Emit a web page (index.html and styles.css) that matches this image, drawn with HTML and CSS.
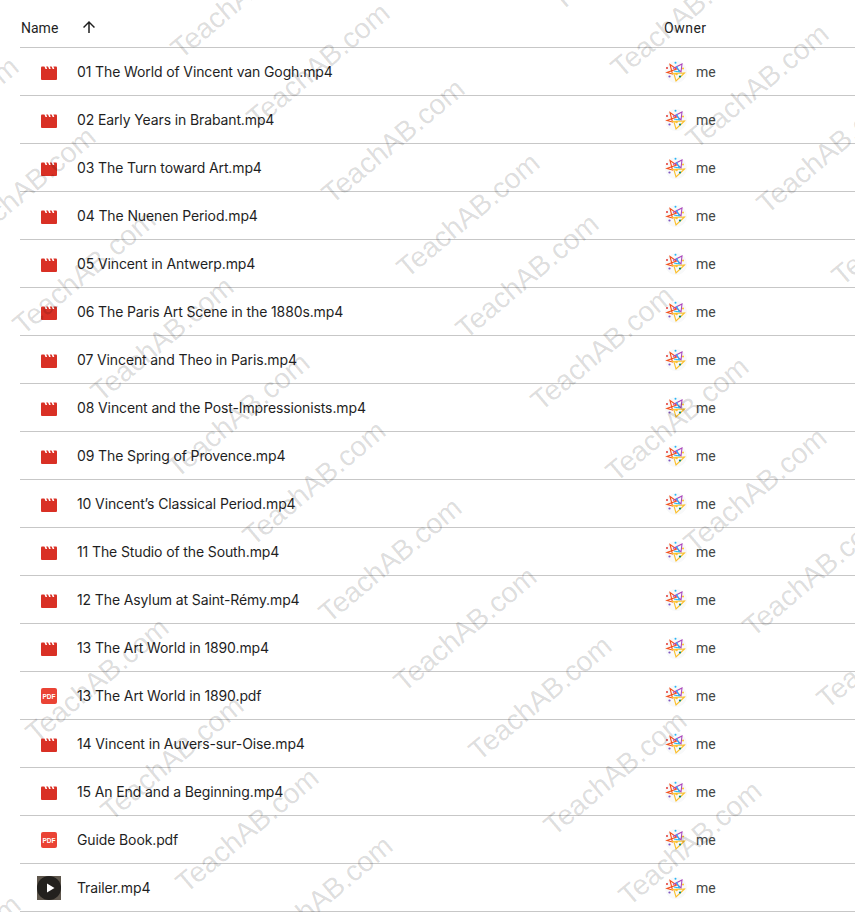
FILE: index.html
```html
<!DOCTYPE html>
<html lang="en">
  <head>
    <meta charset="UTF-8" />
    <title>Files</title>
    <link rel="stylesheet" href="styles.css">
  </head>
  <body>
    <!-- Shared icons -->
    <svg class="defs" width="0" height="0">
      <symbol id="video" viewBox="0 0 16 14">
        <path fill="#d93025" d="M0 1.500Q0 .5 1 .5h14q1 0 1 1v11.500q0 1-1 1H1q-1 0-1-1z" />
        <path fill="#fff" d="M3.300 0h1.800l1 3H4.500zM6.900 0h1.800l1 3H8.100zM10.500 0h1.800l1 3h-1.600z" />
      </symbol>
      <symbol id="pdf" viewBox="0 0 16 16">
        <rect width="16" height="16" rx="2" fill="#ea4335" />
        <text x="8" y="10.700" class="pdf-label">PDF</text>
      </symbol>
      <symbol id="thumb" viewBox="0 0 24 24">
        <rect width="24" height="24" fill="#5f574d" />
        <circle cx="12" cy="12" r="12" fill="#23211e" />
        <path fill="#fff" d="M10 7.500l7.500 4.500-7.500 4.500z" />
      </symbol>
      <symbol id="avatar" viewBox="0 0 22 22">
        <circle cx="11" cy="11" r="11" fill="#f8f9fa" />
        <g fill="none" stroke-width="1.100">
          <path stroke="#f4511e" d="M5 3.500L11.500 8 2 11.500l5.500 1.500L5 3.500z" />
          <path stroke="#ab47bc" d="M8 7.500L17 3l-1 8-5-4.500" />
          <path stroke="#29b6f6" d="M11.500 5L14.500 11 9 10" />
          <path stroke="#fbc02d" d="M6.500 12.500L19.500 12l-8.500 8-2-7" />
        </g>
        <circle cx="10.500" cy="1.800" r="1" fill="#29b6f6" />
        <circle cx="2" cy="7" r="1" fill="#e53935" />
        <circle cx="18" cy="7.500" r="1" fill="#fbc02d" />
        <circle cx="4.500" cy="15.500" r="1.100" fill="#7e57c2" />
        <circle cx="15" cy="15.500" r="1.100" fill="#00897b" />
        <circle cx="11.500" cy="13" r="1.300" fill="#fbc02d" />
      </symbol>
    </svg>

    <!-- File list -->
    <div class="list">
      <div class="row header">
        <div class="name-head">
          Name
          <svg class="sort" viewBox="0 0 24 24" width="18" height="18"><path d="M4 12l1.410 1.410L11 7.830V20h2V7.830l5.580 5.590L20 12l-8-8-8 8z" /></svg>
        </div>
        <div class="owner-head">Owner</div>
      </div>

      <div class="row"><div class="name"><svg class="icon-video"><use href="#video" /></svg><span>01 The World of Vincent van Gogh.mp4</span></div><div class="owner"><svg class="avatar"><use href="#avatar" /></svg>me</div></div>
      <div class="row"><div class="name"><svg class="icon-video"><use href="#video" /></svg><span>02 Early Years in Brabant.mp4</span></div><div class="owner"><svg class="avatar"><use href="#avatar" /></svg>me</div></div>
      <div class="row"><div class="name"><svg class="icon-video"><use href="#video" /></svg><span>03 The Turn toward Art.mp4</span></div><div class="owner"><svg class="avatar"><use href="#avatar" /></svg>me</div></div>
      <div class="row"><div class="name"><svg class="icon-video"><use href="#video" /></svg><span>04 The Nuenen Period.mp4</span></div><div class="owner"><svg class="avatar"><use href="#avatar" /></svg>me</div></div>
      <div class="row"><div class="name"><svg class="icon-video"><use href="#video" /></svg><span>05 Vincent in Antwerp.mp4</span></div><div class="owner"><svg class="avatar"><use href="#avatar" /></svg>me</div></div>
      <div class="row"><div class="name"><svg class="icon-video"><use href="#video" /></svg><span>06 The Paris Art Scene in the 1880s.mp4</span></div><div class="owner"><svg class="avatar"><use href="#avatar" /></svg>me</div></div>
      <div class="row"><div class="name"><svg class="icon-video"><use href="#video" /></svg><span>07 Vincent and Theo in Paris.mp4</span></div><div class="owner"><svg class="avatar"><use href="#avatar" /></svg>me</div></div>
      <div class="row"><div class="name"><svg class="icon-video"><use href="#video" /></svg><span>08 Vincent and the Post-Impressionists.mp4</span></div><div class="owner"><svg class="avatar"><use href="#avatar" /></svg>me</div></div>
      <div class="row"><div class="name"><svg class="icon-video"><use href="#video" /></svg><span>09 The Spring of Provence.mp4</span></div><div class="owner"><svg class="avatar"><use href="#avatar" /></svg>me</div></div>
      <div class="row"><div class="name"><svg class="icon-video"><use href="#video" /></svg><span>10 Vincent’s Classical Period.mp4</span></div><div class="owner"><svg class="avatar"><use href="#avatar" /></svg>me</div></div>
      <div class="row"><div class="name"><svg class="icon-video"><use href="#video" /></svg><span>11 The Studio of the South.mp4</span></div><div class="owner"><svg class="avatar"><use href="#avatar" /></svg>me</div></div>
      <div class="row"><div class="name"><svg class="icon-video"><use href="#video" /></svg><span>12 The Asylum at Saint-Rémy.mp4</span></div><div class="owner"><svg class="avatar"><use href="#avatar" /></svg>me</div></div>
      <div class="row"><div class="name"><svg class="icon-video"><use href="#video" /></svg><span>13 The Art World in 1890.mp4</span></div><div class="owner"><svg class="avatar"><use href="#avatar" /></svg>me</div></div>
      <div class="row"><div class="name"><svg class="icon-pdf"><use href="#pdf" /></svg><span>13 The Art World in 1890.pdf</span></div><div class="owner"><svg class="avatar"><use href="#avatar" /></svg>me</div></div>
      <div class="row"><div class="name"><svg class="icon-video"><use href="#video" /></svg><span>14 Vincent in Auvers-sur-Oise.mp4</span></div><div class="owner"><svg class="avatar"><use href="#avatar" /></svg>me</div></div>
      <div class="row"><div class="name"><svg class="icon-video"><use href="#video" /></svg><span>15 An End and a Beginning.mp4</span></div><div class="owner"><svg class="avatar"><use href="#avatar" /></svg>me</div></div>
      <div class="row"><div class="name"><svg class="icon-pdf"><use href="#pdf" /></svg><span>Guide Book.pdf</span></div><div class="owner"><svg class="avatar"><use href="#avatar" /></svg>me</div></div>
      <div class="row"><div class="name"><svg class="icon-thumb"><use href="#thumb" /></svg><span>Trailer.mp4</span></div><div class="owner"><svg class="avatar"><use href="#avatar" /></svg>me</div></div>
    </div>

    <!-- Watermark -->
    <svg class="watermarks" viewBox="0 0 855 912">
      <g transform="translate(2 0)">
        <text transform="translate(-116 183) rotate(-40)">TeachAB.com</text>
        <text transform="translate(-39 253) rotate(-40)">TeachAB.com</text>
        <text transform="translate(21 336) rotate(-40)">TeachAB.com</text>
        <text transform="translate(99 403) rotate(-40)">TeachAB.com</text>
        <text transform="translate(175 479) rotate(-40)">TeachAB.com</text>
        <text transform="translate(251 547) rotate(-40)">TeachAB.com</text>
        <text transform="translate(327 624) rotate(-40)">TeachAB.com</text>
        <text transform="translate(402 693) rotate(-40)">TeachAB.com</text>
        <text transform="translate(477 762) rotate(-40)">TeachAB.com</text>
        <text transform="translate(552 837) rotate(-40)">TeachAB.com</text>
        <text transform="translate(627 907) rotate(-40)">TeachAB.com</text>
        <text transform="translate(34 744) rotate(-40)">TeachAB.com</text>
        <text transform="translate(109 822) rotate(-40)">TeachAB.com</text>
        <text transform="translate(184 894) rotate(-40)">TeachAB.com</text>
        <text transform="translate(258 962) rotate(-40)">TeachAB.com</text>
        <text transform="translate(-114 1021) rotate(-40)">TeachAB.com</text>
        <text transform="translate(179 60) rotate(-40)">TeachAB.com</text>
        <text transform="translate(255 129) rotate(-40)">TeachAB.com</text>
        <text transform="translate(330 205) rotate(-40)">TeachAB.com</text>
        <text transform="translate(405 279) rotate(-40)">TeachAB.com</text>
        <text transform="translate(464 340) rotate(-40)">TeachAB.com</text>
        <text transform="translate(539 412) rotate(-40)">TeachAB.com</text>
        <text transform="translate(614 483) rotate(-40)">TeachAB.com</text>
        <text transform="translate(692 554) rotate(-40)">TeachAB.com</text>
        <text transform="translate(751 638) rotate(-40)">TeachAB.com</text>
        <text transform="translate(825 710) rotate(-40)">TeachAB.com</text>
        <text transform="translate(559 12) rotate(-40)">TeachAB.com</text>
        <text transform="translate(619 79) rotate(-40)">TeachAB.com</text>
        <text transform="translate(694 150) rotate(-40)">TeachAB.com</text>
        <text transform="translate(765 215) rotate(-40)">TeachAB.com</text>
        <text transform="translate(840 287) rotate(-40)">TeachAB.com</text>
      </g>
    </svg>
  </body>
</html>
```
FILE: styles.css
```css
body {
  margin: 0;
  background: #fff;
  font-family: Inter, sans-serif;
  font-size: 14px;
  color: #1f1f1f;
  position: relative;
  height: 912px;
  overflow: hidden;
}
.defs {
  position: absolute;
}
.list {
  margin-left: 20px;
}
.row {
  display: grid;
  grid-template-columns: 644px 1fr;
  align-items: center;
  height: 47px;
  border-bottom: 1px solid #c7c7c7;
}
.header {
  font-family: Roboto, sans-serif;
  padding-top: 9px;
  height: 38px;
}
.name-head {
  display: flex;
  align-items: center;
  padding-left: 1px;
}
.owner-head {
  letter-spacing: 0.5px;
}
.sort {
  margin-left: 22px;
  margin-top: -2px;
  fill: #1f1f1f;
}
.name {
  display: flex;
  align-items: center;
  padding-left: 17px;
}
.name span {
  margin-left: 16px;
  letter-spacing: -0.12px;
}
/* all icons sit in a 24px slot so the names line up */
.icon-video {
  width: 16px;
  height: 14px;
  margin: 3px 4px 0;
}
.icon-pdf {
  width: 16px;
  height: 16px;
  margin: 1px 4px 0;
}
.icon-thumb {
  width: 24px;
  height: 24px;
  margin-top: 1px;
}
.pdf-label {
  font-family: "Liberation Sans", sans-serif;
  font-size: 6.5px;
  font-weight: bold;
  fill: #fff;
  text-anchor: middle;
}
.owner {
  display: flex;
  align-items: center;
  padding-left: 1px;
  font-family: Roboto, sans-serif;
  color: #444746;
}
.avatar {
  width: 22px;
  height: 22px;
  margin-top: 1px;
  margin-right: 9px;
}
.watermarks {
  position: absolute;
  left: 0;
  top: 0;
  width: 855px;
  height: 912px;
  pointer-events: none;
  font-family: "Liberation Sans", sans-serif;
  font-size: 28.5px;
  fill: rgba(0, 0, 0, 0.14);
}
```
